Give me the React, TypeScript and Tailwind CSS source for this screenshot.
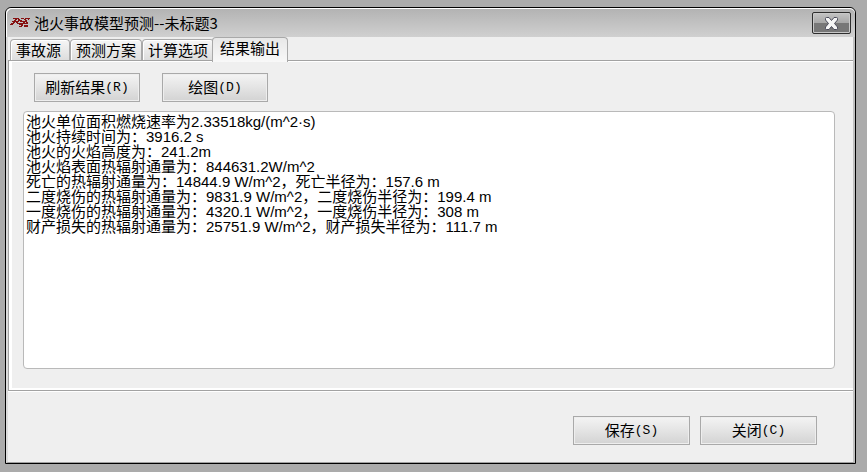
import { useState } from "react";

const TABS = ["事故源", "预测方案", "计算选项", "结果输出"];

const RESULTS = [
  "池火单位面积燃烧速率为2.33518kg/(m^2·s)",
  "池火持续时间为：3916.2 s",
  "池火的火焰高度为：241.2m",
  "池火焰表面热辐射通量为：844631.2W/m^2",
  "死亡的热辐射通量为：14844.9 W/m^2，死亡半径为：157.6 m",
  "二度烧伤的热辐射通量为：9831.9 W/m^2，二度烧伤半径为：199.4 m",
  "一度烧伤的热辐射通量为：4320.1 W/m^2，一度烧伤半径为：308 m",
  "财产损失的热辐射通量为：25751.9 W/m^2，财产损失半径为：111.7 m",
].join("\n");

function AppLogo() {
  return (
    <svg
      width="20"
      height="12"
      viewBox="0 0 20 12"
      fill="#861010"
      shapeRendering="crispEdges"
      aria-hidden="true"
    >
      <path d="M3 1h6v1H3zM8 2h2v2H8zM5 2h2v1H5zM4 3h2v1H4zM2 4h7v1H2zM3 5h2v1H3zM1 6h3v1H1zM0 7h3v1H0zM6 5h2v1H6zM7 6h2v1H7z" />
      <path d="M11 1h3v1h-3zM10 3h2v2h-2zM11 4h4v1h-4zM13 5h2v2h-2zM9 6h4v2H9zM9 9h3v1H9zM11 8h2v1h-2z" />
      <path d="M14 2h2v1h-2zM15 1h5v1h-5zM18 2h1v1h-1zM15 3h2v2h-2zM16 5h2v1h-2zM15 6h3v1h-3zM14 8h4v2h-4z" />
    </svg>
  );
}

function CloseIcon() {
  return (
    <svg width="15" height="13" viewBox="0 0 15 13" aria-hidden="true">
      <path
        d="M1.5 1.5q0-1 1-1H5L7.5 3.500 10 .5h2.500q1 0 1 1V3l-3 3.500 3 3.500v1.500q0 1-1 1H10L7.500 9.500 5 12.500H2.500q-1 0-1-1V10l3-3.500-3-3.500z"
        fill="#f6f6f6"
        stroke="#4c4d5c"
        strokeLinejoin="round"
      />
    </svg>
  );
}

type PushButtonProps = {
  label: string;
  hotkey: string;
  wide?: boolean;
};

function PushButton({ label, hotkey, wide }: PushButtonProps) {
  return (
    <button
      type="button"
      className={`${
        wide ? "w-[117px]" : "w-[106px]"
      } flex h-[29px] items-center justify-center border border-[#a9a9a9] bg-linear-to-b from-[#f4f4f4] via-[#e4e4e4] to-[#d3d3d3] text-[15px] shadow-[inset_0_0_0_1px_#eeeeee]`}
    >
      {label}
      <span className="font-['Liberation_Mono',monospace] text-[13px]">({hotkey})</span>
    </button>
  );
}

export default function App() {
  const [activeTab, setActiveTab] = useState("结果输出");
  const [output, setOutput] = useState(RESULTS);

  return (
    <div className="flex min-h-screen flex-col bg-[#ababab] pt-[7px] pr-[11px] pb-2 pl-[5px] font-['Noto_Sans_CJK_SC',sans-serif] text-black">
      <main className="flex flex-1 flex-col rounded-t-md border border-black bg-[#efefef]">
        <header className="flex h-[29px] shrink-0 items-center rounded-t-md border-t border-l border-white bg-linear-to-b from-[#b3b3b3] to-[#d0d0d0] pr-1 pl-[3px]">
          <AppLogo />
          <h1 className="ml-1 flex-1 text-[15px]">池火事故模型预测--未标题3</h1>
          <button
            type="button"
            aria-label="关闭窗口"
            className="flex h-[22px] w-[39px] items-center justify-center rounded-xs border border-[#2e2e2e] bg-linear-to-b from-[#c4c4c4] from-0% via-[#aaaaaa] via-45% to-[#929292] shadow-[inset_0_0_0_1px_#c8c8c8,inset_0_-10px_0_0_#777777]"
          >
            <CloseIcon />
          </button>
        </header>

        <div className="flex flex-1 flex-col border-r-2 border-b border-l-2 border-r-[#c0c0c0] border-b-[#a0a0a0] border-l-[#dcdcdc]">
          <nav role="tablist" className="flex h-[23px] shrink-0 items-end pl-0.5">
            {TABS.map((tab) => {
              const active = tab === activeTab;
              return (
                <button
                  key={tab}
                  type="button"
                  role="tab"
                  aria-selected={active}
                  onClick={() => setActiveTab(tab)}
                  className={
                    active
                      ? "z-10 -mb-0.5 -ml-0.5 flex h-[25px] items-center rounded-t-sm border border-b-0 border-[#a9a9a9] bg-linear-to-b from-[#e8e8e8] to-[#f8f8f8] px-[7px] pb-1 text-[15px]"
                      : "flex h-[21px] min-w-[60px] items-center rounded-t-sm border border-b-0 border-[#a9a9a9] bg-linear-to-b from-[#f6f6f6] to-[#dddddd] px-[5px] text-[15px] shadow-[inset_1px_1px_0_0_#ffffff]"
                  }
                >
                  {tab}
                </button>
              );
            })}
          </nav>

          <section
            role="tabpanel"
            className="flex flex-1 flex-col border-t border-b border-l border-[#a2a2a2] shadow-[0_1px_0_0_#ffffff]"
          >
            <div className="flex flex-1 flex-col border-t border-b-2 border-l-[3px] border-white pt-[11px] pr-[18px] pb-[19px] pl-[11px]">
              <div className="mb-[9px] flex gap-[22px] pl-[11px]">
                <PushButton label="刷新结果" hotkey="R" />
                <PushButton label="绘图" hotkey="D" />
              </div>
              <textarea
                aria-label="结果输出"
                spellCheck={false}
                value={output}
                onChange={(e) => setOutput(e.target.value)}
                className="min-h-40 w-full flex-1 resize-none rounded-sm border border-[#b9b9b9] bg-white px-0.5 pt-0.5 font-['Liberation_Sans','Noto_Sans_CJK_SC',sans-serif] text-[15px] leading-[15px] outline-none"
              />
            </div>
          </section>

          <footer className="flex shrink-0 justify-end gap-[10px] pt-[25px] pr-9 pb-[17px]">
            <PushButton label="保存" hotkey="S" wide />
            <PushButton label="关闭" hotkey="C" wide />
          </footer>
        </div>
      </main>
    </div>
  );
}
